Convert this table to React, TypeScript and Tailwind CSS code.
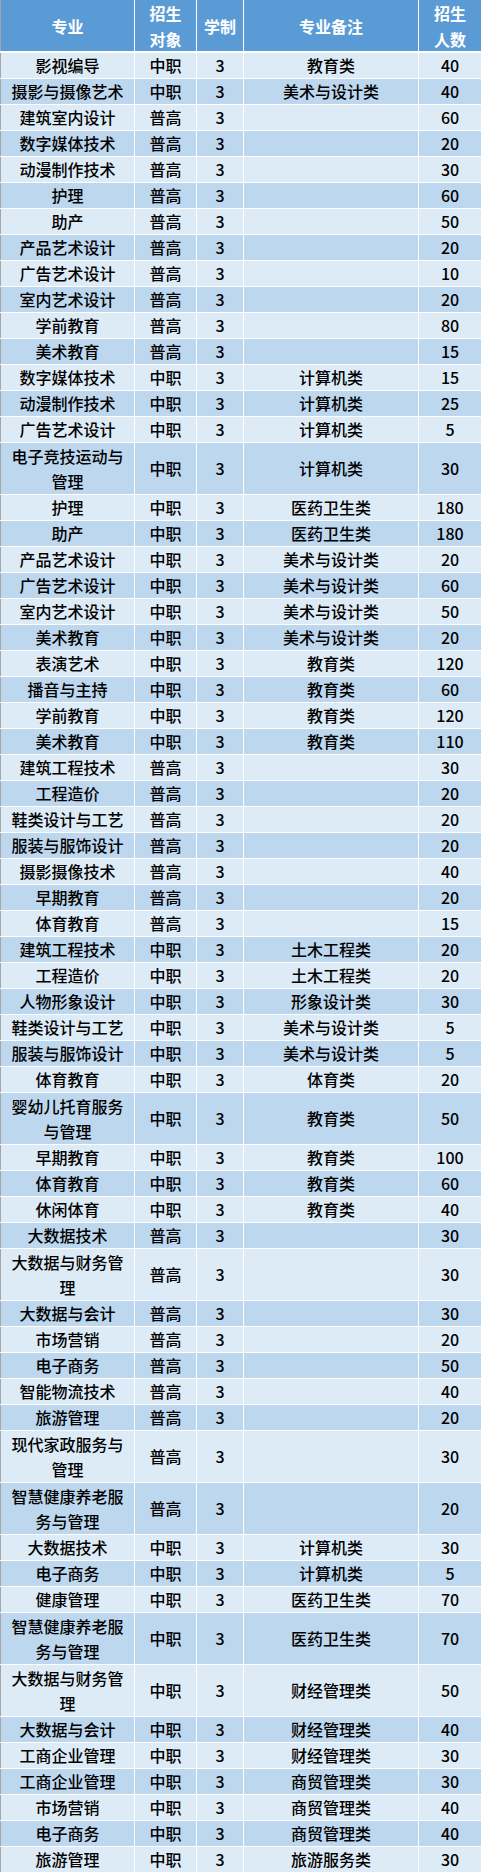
import React from "react";

type Row = [string, string, string, string, number];

const rows: Row[] = [
  ["影视编导", "中职", "3", "教育类", 40],
  ["摄影与摄像艺术", "中职", "3", "美术与设计类", 40],
  ["建筑室内设计", "普高", "3", "", 60],
  ["数字媒体技术", "普高", "3", "", 20],
  ["动漫制作技术", "普高", "3", "", 30],
  ["护理", "普高", "3", "", 60],
  ["助产", "普高", "3", "", 50],
  ["产品艺术设计", "普高", "3", "", 20],
  ["广告艺术设计", "普高", "3", "", 10],
  ["室内艺术设计", "普高", "3", "", 20],
  ["学前教育", "普高", "3", "", 80],
  ["美术教育", "普高", "3", "", 15],
  ["数字媒体技术", "中职", "3", "计算机类", 15],
  ["动漫制作技术", "中职", "3", "计算机类", 25],
  ["广告艺术设计", "中职", "3", "计算机类", 5],
  ["电子竞技运动与管理", "中职", "3", "计算机类", 30],
  ["护理", "中职", "3", "医药卫生类", 180],
  ["助产", "中职", "3", "医药卫生类", 180],
  ["产品艺术设计", "中职", "3", "美术与设计类", 20],
  ["广告艺术设计", "中职", "3", "美术与设计类", 60],
  ["室内艺术设计", "中职", "3", "美术与设计类", 50],
  ["美术教育", "中职", "3", "美术与设计类", 20],
  ["表演艺术", "中职", "3", "教育类", 120],
  ["播音与主持", "中职", "3", "教育类", 60],
  ["学前教育", "中职", "3", "教育类", 120],
  ["美术教育", "中职", "3", "教育类", 110],
  ["建筑工程技术", "普高", "3", "", 30],
  ["工程造价", "普高", "3", "", 20],
  ["鞋类设计与工艺", "普高", "3", "", 20],
  ["服装与服饰设计", "普高", "3", "", 20],
  ["摄影摄像技术", "普高", "3", "", 40],
  ["早期教育", "普高", "3", "", 20],
  ["体育教育", "普高", "3", "", 15],
  ["建筑工程技术", "中职", "3", "土木工程类", 20],
  ["工程造价", "中职", "3", "土木工程类", 20],
  ["人物形象设计", "中职", "3", "形象设计类", 30],
  ["鞋类设计与工艺", "中职", "3", "美术与设计类", 5],
  ["服装与服饰设计", "中职", "3", "美术与设计类", 5],
  ["体育教育", "中职", "3", "体育类", 20],
  ["婴幼儿托育服务与管理", "中职", "3", "教育类", 50],
  ["早期教育", "中职", "3", "教育类", 100],
  ["体育教育", "中职", "3", "教育类", 60],
  ["休闲体育", "中职", "3", "教育类", 40],
  ["大数据技术", "普高", "3", "", 30],
  ["大数据与财务管理", "普高", "3", "", 30],
  ["大数据与会计", "普高", "3", "", 30],
  ["市场营销", "普高", "3", "", 20],
  ["电子商务", "普高", "3", "", 50],
  ["智能物流技术", "普高", "3", "", 40],
  ["旅游管理", "普高", "3", "", 20],
  ["现代家政服务与管理", "普高", "3", "", 30],
  ["智慧健康养老服务与管理", "普高", "3", "", 20],
  ["大数据技术", "中职", "3", "计算机类", 30],
  ["电子商务", "中职", "3", "计算机类", 5],
  ["健康管理", "中职", "3", "医药卫生类", 70],
  ["智慧健康养老服务与管理", "中职", "3", "医药卫生类", 70],
  ["大数据与财务管理", "中职", "3", "财经管理类", 50],
  ["大数据与会计", "中职", "3", "财经管理类", 40],
  ["工商企业管理", "中职", "3", "财经管理类", 30],
  ["工商企业管理", "中职", "3", "商贸管理类", 30],
  ["市场营销", "中职", "3", "商贸管理类", 40],
  ["电子商务", "中职", "3", "商贸管理类", 40],
  ["旅游管理", "中职", "3", "旅游服务类", 30],
];

const cell = "flex items-center justify-center text-center border-r border-white leading-[25px]";

export default function App() {
  return (
    <div
      className="w-[481px] bg-white text-[16px] text-black"
      style={{ fontFamily: '"Noto Sans CJK SC", "Noto Sans", sans-serif' }}
    >
      <div className="flex h-[53px] border-b-2 border-white bg-[#5b9bd5] font-bold text-white leading-[26px]">
        <div className="flex w-[135px] items-center justify-center border-l border-l-[#a6a6a6] border-r border-r-white">专业</div>
        <div className="flex w-[62px] items-center justify-center border-r border-white px-[8px] text-center">招生对象</div>
        <div className="flex w-[47px] items-center justify-center border-r border-white">学制</div>
        <div className="flex w-[175px] items-center justify-center border-r border-white">专业备注</div>
        <div className="flex w-[62px] items-center justify-center px-[8px] text-center">招生人数</div>
      </div>
      {rows.map((r, i) => {
        const bg = i % 2 === 0 ? "bg-[#ddebf7]" : "bg-[#bdd7ee]";
        const double = r[0].length > 7;
        return (
          <div
            key={i}
            className={`flex border-b border-white font-medium ${bg} ${double ? "h-[52px]" : "h-[26px]"}`}
          >
            <div className="flex w-[135px] items-center justify-center border-l border-l-[#a6a6a6] border-r border-r-white px-[4px] text-center leading-[25px]">
              {r[0]}
            </div>
            <div className={`${cell} w-[62px]`}>{r[1]}</div>
            <div className={`${cell} w-[47px]`}>{r[2]}</div>
            <div className={`${cell} w-[175px]`}>{r[3]}</div>
            <div className="flex w-[62px] items-center justify-center leading-[25px]">{r[4]}</div>
          </div>
        );
      })}
    </div>
  );
}
